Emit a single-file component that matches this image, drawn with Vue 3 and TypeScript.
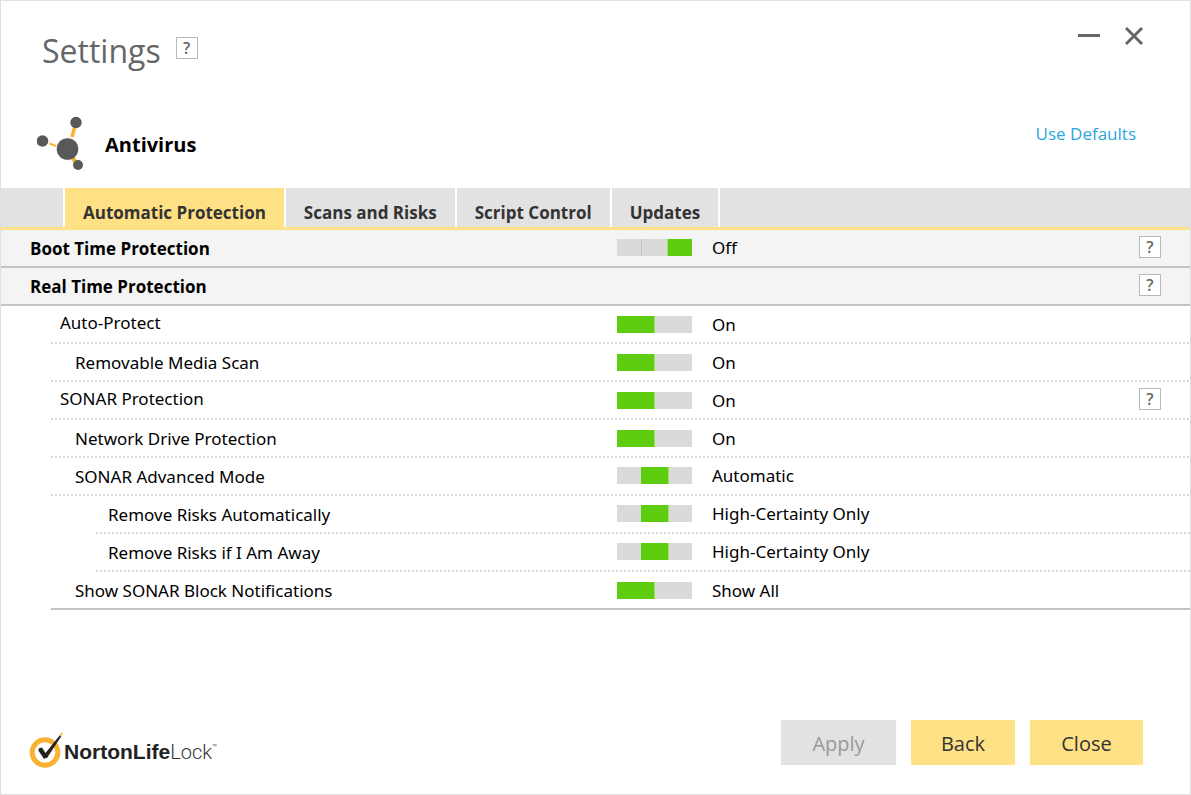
<script setup lang="ts">
import { ref } from 'vue'

interface Setting {
  id: string
  label: string
  status: string
  steps: 2 | 3
  value: number
  level: 'section' | 'group' | 'item' | 'sub'
  line: 'solid' | 'dotted' | 'inset' | 'end'
  help: boolean
}

const tabs = ['Automatic Protection', 'Scans and Risks', 'Script Control', 'Updates']
const activeTab = ref(tabs[0])

const settings = ref<Setting[]>([
  { id: 'boot', label: 'Boot Time Protection', status: 'Off', steps: 3, value: 2, level: 'section', line: 'solid', help: true },
  { id: 'real-time', label: 'Real Time Protection', status: '', steps: 2, value: 0, level: 'section', line: 'solid', help: true },
  { id: 'auto', label: 'Auto-Protect', status: 'On', steps: 2, value: 0, level: 'group', line: 'dotted', help: false },
  { id: 'media', label: 'Removable Media Scan', status: 'On', steps: 2, value: 0, level: 'item', line: 'dotted', help: false },
  { id: 'sonar', label: 'SONAR Protection', status: 'On', steps: 2, value: 0, level: 'group', line: 'dotted', help: true },
  { id: 'network', label: 'Network Drive Protection', status: 'On', steps: 2, value: 0, level: 'item', line: 'dotted', help: false },
  { id: 'advanced', label: 'SONAR Advanced Mode', status: 'Automatic', steps: 3, value: 1, level: 'item', line: 'dotted', help: false },
  { id: 'risks-auto', label: 'Remove Risks Automatically', status: 'High-Certainty Only', steps: 3, value: 1, level: 'sub', line: 'inset', help: false },
  { id: 'risks-away', label: 'Remove Risks if I Am Away', status: 'High-Certainty Only', steps: 3, value: 1, level: 'sub', line: 'inset', help: false },
  { id: 'notify', label: 'Show SONAR Block Notifications', status: 'Show All', steps: 2, value: 0, level: 'item', line: 'end', help: false },
])
</script>

<template>
  <div class="window">
    <header class="titlebar">
      <h1>Settings</h1>
      <button class="help" type="button" aria-label="Help">?</button>
      <div class="controls">
        <button type="button" aria-label="Minimize">
          <svg width="22" height="22" viewBox="0 0 22 22"><path d="M0 11.500h22" stroke="#666" stroke-width="3" /></svg>
        </button>
        <button type="button" aria-label="Close window">
          <svg width="22" height="22" viewBox="0 0 22 22"><path d="M3 4l16 16M19 4L3 20" stroke="#666" stroke-width="3" /></svg>
        </button>
      </div>
    </header>

    <div class="heading">
      <svg class="product" width="48" height="54" viewBox="0 0 48 54" aria-hidden="true">
        <g stroke="#f9b233" fill="none">
          <path d="M38 9L35 20" stroke-width="3.5" />
          <path d="M12.500 26.500L19 29" stroke-width="2.200" />
          <path d="M35 40L40 47" stroke-width="4" />
        </g>
        <g fill="#595959">
          <circle cx="39" cy="5.500" r="5.700" />
          <circle cx="5.500" cy="24" r="5.800" />
          <circle cx="30.500" cy="32" r="10.800" />
          <circle cx="41" cy="48" r="5" />
        </g>
      </svg>
      <h2>Antivirus</h2>
      <a class="defaults" href="#">Use Defaults</a>
    </div>

    <nav class="tabs" role="tablist">
      <span class="filler lead"></span>
      <button
        v-for="tab in tabs"
        :key="tab"
        type="button"
        role="tab"
        :class="{ active: tab === activeTab }"
        :aria-selected="tab === activeTab"
        @click="activeTab = tab"
      >{{ tab }}</button>
      <span class="filler"></span>
    </nav>

    <main>
      <div v-for="s in settings" :key="s.id" class="row" :class="[s.level, s.line, 'steps-' + s.steps]">
        <label v-if="s.status" class="name" :for="s.id">{{ s.label }}</label>
        <span v-else class="name">{{ s.label }}</span>
        <input
          v-if="s.status"
          :id="s.id"
          v-model.number="s.value"
          class="slider"
          :class="{ off: s.steps === 3 && s.value === 2 }"
          type="range"
          min="0"
          :max="s.steps - 1"
        />
        <span class="status">{{ s.status }}</span>
        <button v-if="s.help" class="help" type="button" :aria-label="'Help: ' + s.label">?</button>
      </div>
    </main>

    <footer>
      <div class="brand">
        <svg width="34" height="36" viewBox="0 0 34 36" aria-hidden="true">
          <circle cx="16" cy="20.500" r="12.800" fill="none" stroke="#f9b233" stroke-width="5" />
          <path d="M9.500 16.500L13 15.500L16.500 21L31 3L32.500 4L18 26H15Z" fill="#222" />
          <path d="M10.500 17L16.500 26" stroke="#222" stroke-width="3.500" />
          <path d="M31 4L33.500 1" stroke="#f9b233" stroke-width="1.500" />
        </svg>
        <span class="wordmark"><b>NortonLife</b>Lock<small>™</small></span>
      </div>
      <div class="actions">
        <button class="apply" type="button" disabled>Apply</button>
        <button class="back" type="button">Back</button>
        <button class="close" type="button">Close</button>
      </div>
    </footer>
  </div>
</template>

<style>
body {
  margin: 0;
  background: #fff;
}
</style>

<style scoped>
* {
  box-sizing: border-box;
}
.window {
  display: flex;
  flex-direction: column;
  min-height: 100vh;
  border: 1px solid #e0e0e0;
  background: #fff;
  color: #000;
  font-family: "Open Sans", "Noto Sans", sans-serif;
  font-size: 17px;
  line-height: 24px;
}
button {
  margin: 0;
  padding: 0;
  border: 0;
  background: none;
  color: inherit;
  font: inherit;
  cursor: pointer;
}
h1,
h2 {
  margin: 0;
}
.titlebar {
  display: flex;
  align-items: flex-start;
  padding: 22px 45px 0 41px;
}
h1 {
  color: #666;
  font-size: 32px;
  font-weight: 400;
  line-height: 56px;
}
.help {
  width: 22px;
  height: 22px;
  border: 1px solid #b8b8b8;
  background: #fff;
  color: #666;
  font-size: 16px;
  font-weight: 600;
  line-height: 20px;
  text-align: center;
}
.titlebar .help {
  margin: 14px 0 0 15px;
}
.controls {
  display: flex;
  gap: 23px;
  margin-left: auto;
}
.controls svg {
  display: block;
}
.controls button {
  height: 24px;
}
.heading {
  display: flex;
  align-items: center;
  height: 54px;
  margin: 38px 54px 17px 36px;
}
h2 {
  margin-left: 20px;
  padding-top: 2px;
  font-size: 20px;
  font-weight: 700;
  line-height: 24px;
}
.defaults {
  margin: 0 0 20px auto;
  color: #2ba6de;
  font-size: 17px;
  text-decoration: none;
}
.tabs {
  display: flex;
  gap: 2px;
  height: 42px;
  border-bottom: 3px solid #ffe185;
}
.tabs > * {
  background: #e2e2e2;
}
.filler {
  flex: 1;
}
.filler.lead {
  flex: 0 0 62px;
}
.tabs button {
  padding: 10px 18px 0;
  color: #333;
  font-weight: 700;
  white-space: nowrap;
}
.tabs .active {
  background: #ffe185;
}
.row {
  --line: linear-gradient(#c3c3c3, #c3c3c3);
  --inset: 0px;
  display: grid;
  grid-template-columns: minmax(0, 616fr) 95px minmax(0, 427fr) 22px;
  align-items: center;
  height: 38px;
  padding: 0 29px 2px 0;
  background: var(--line) right bottom / calc(100% - var(--inset)) 2px no-repeat;
  font-family: "Noto Sans", "Open Sans", sans-serif;
}
.row.dotted,
.row.inset {
  --line: repeating-linear-gradient(to right, #dadada 0 2px, transparent 2px 4px);
}
.row.dotted,
.row.end {
  --inset: 50px;
}
.row.inset {
  --inset: 95px;
}
.row.section {
  background-color: #f4f4f4;
}
.name {
  padding-top: 2px;
}
.section .name {
  padding-left: 29px;
  font-family: "Open Sans", "Noto Sans", sans-serif;
  font-weight: 700;
}
.group .name {
  padding: 0 0 2px 59px;
}
.item .name {
  padding-left: 74px;
}
.sub .name {
  padding-left: 107px;
}
.status {
  grid-column: 3;
}
.steps-2 .status {
  padding-top: 2px;
}
.row .help {
  grid-column: 4;
  margin-bottom: 2px;
  font-family: "Open Sans", "Noto Sans", sans-serif;
}
.slider {
  --thumb: 38px;
  appearance: none;
  width: 75px;
  height: 17px;
  margin: 0;
  background: #dadada;
  cursor: pointer;
}
.steps-3 .slider {
  --thumb: 28px;
  margin-bottom: 2px;
}
.steps-3 .slider.off {
  --thumb: 25px;
  background: linear-gradient(to right, #dadada 24px, #c4c4c4 24px 25px, #dadada 25px);
}
.slider::-webkit-slider-thumb {
  appearance: none;
  width: var(--thumb);
  height: 17px;
  border-right: 1px solid #9ee06c;
  background: #5fcd0f;
}
.slider.off::-webkit-slider-thumb {
  border-right: 0;
  border-left: 1px solid #9ee06c;
}
.slider::-moz-range-thumb {
  width: var(--thumb);
  height: 17px;
  border: 0;
  border-radius: 0;
  background: #5fcd0f;
}
footer {
  display: flex;
  align-items: flex-start;
  justify-content: space-between;
  margin-top: auto;
  padding: 0 47px 26px 28px;
}
.brand {
  display: flex;
  align-items: center;
  padding-top: 12px;
}
.brand svg {
  flex: none;
}
.wordmark {
  display: flex;
  margin: 4px 0 0 1px;
  color: #333;
  font-family: Roboto, "Liberation Sans", sans-serif;
  font-size: 20px;
  font-weight: 300;
}
.wordmark b {
  color: #222;
  font-family: "Liberation Sans", Arial, sans-serif;
  font-size: 21px;
  font-weight: 700;
}
.wordmark small {
  font-size: 8px;
  line-height: 16px;
}
.actions {
  display: flex;
  gap: 15px;
}
.actions button {
  height: 45px;
  padding-top: 2px;
  background: #ffe185;
  color: #333;
  font-size: 20px;
  line-height: 28px;
}
.actions .apply {
  width: 115px;
  background: #e2e2e2;
  color: #999;
  cursor: default;
}
.actions .back {
  width: 104px;
}
.actions .close {
  width: 113px;
}
</style>
